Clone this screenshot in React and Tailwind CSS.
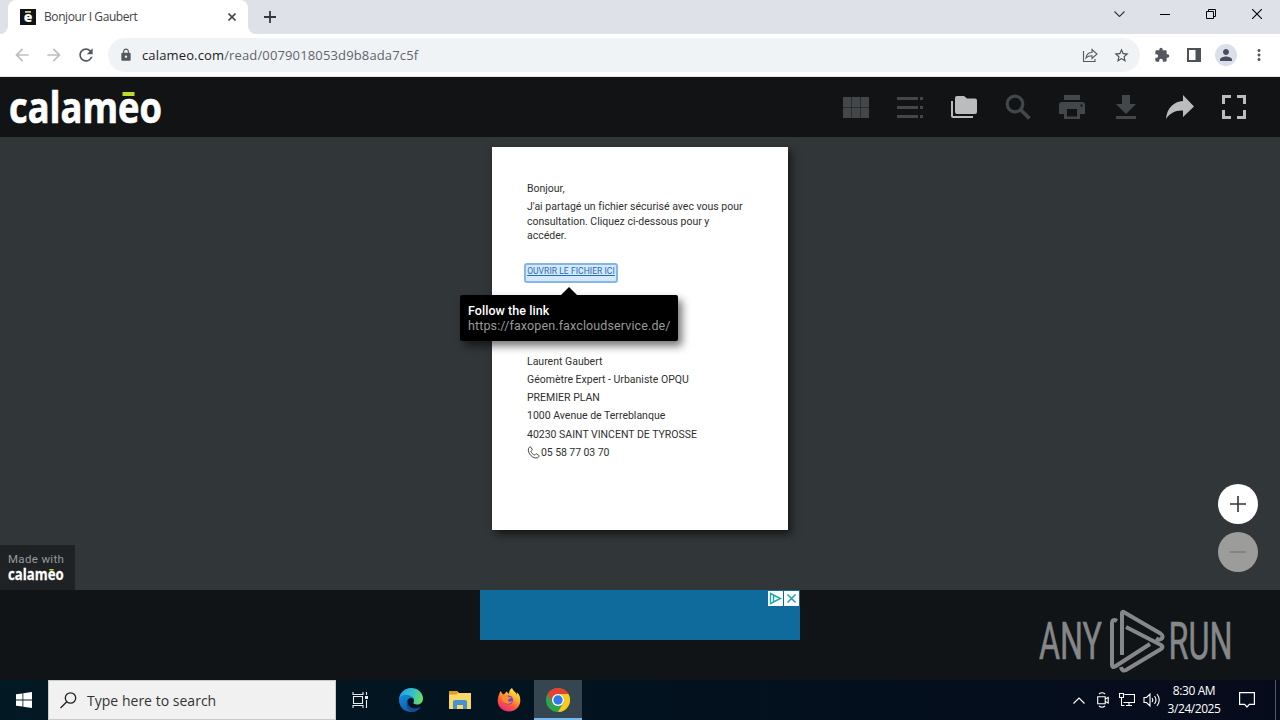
import React from "react";
import { MdSearch, MdExtension, MdStarBorder, MdLock, MdRefresh, MdPerson, MdArrowBack, MdArrowForward, MdMoreVert } from "react-icons/md";

function CalameoLogo({ className }) {
  return (
    <svg className={className} viewBox="0 0 152 33" overflow="visible">
      <text x="-1" y="31.200" fontFamily="Open Sans, Noto Sans, sans-serif" fontWeight="700" fontSize="43.500" textLength="153" lengthAdjust="spacingAndGlyphs" fill="#fff" stroke="#fff" strokeWidth=".7">calameo</text>
      <rect x="112.500" y="0" width="12" height="4" fill="#c2d82e" />
    </svg>
  );
}

function TabStrip() {
  return (
    <div className="flex h-[34px] shrink-0 items-stretch bg-[#dee1e8] pl-2">
      <div className="relative flex w-[240px] items-center rounded-t-lg bg-white pl-3">
        <svg className="absolute -left-2 bottom-0 h-2 w-2" viewBox="0 0 8 8"><path d="M8 0v8H0a8 8 0 0 0 8-8" fill="#fff" /></svg>
        <svg className="absolute -right-2 bottom-0 h-2 w-2" viewBox="0 0 8 8"><path d="M0 0v8h8a8 8 0 0 1-8-8" fill="#fff" /></svg>
        <svg className="h-4 w-4" viewBox="0 0 16 16" overflow="visible">
          <rect width="16" height="16" fill="#111416" />
          <text x="8" y="13.300" fontSize="14" fontWeight="800" fontFamily="Open Sans, sans-serif" textAnchor="middle" fill="#fff">e</text>
          <rect x="5" y="2" width="6" height="1.800" fill="#c9cf78" />
        </svg>
        <span className="ml-2 whitespace-nowrap font-['Open_Sans','Noto_Sans',sans-serif] text-[12px] tracking-[-0.41px] text-[#3f4246]">Bonjour I Gaubert</span>
        <svg className="ml-auto mr-3 h-2 w-2" viewBox="0 0 8 8"><path d="M.5.5l7 7m0-7l-7 7" stroke="#45484d" strokeWidth="1.600" /></svg>
      </div>
      <svg className="ml-4 mt-[11px] h-3 w-3" viewBox="0 0 12 12"><path d="M6 0v12M0 6h12" stroke="#35383c" strokeWidth="1.800" /></svg>
      <div className="ml-auto flex h-7 items-center">
        <svg className="mr-[35px] h-[6px] w-[11px]" viewBox="0 0 11 6"><path d="M.5.5l5 5 5-5" stroke="#33363a" strokeWidth="1.100" fill="none" /></svg>
        <svg className="mr-9 h-[11px] w-[10px]" viewBox="0 0 10 11"><path d="M0 5.500h10" stroke="#000" /></svg>
        <svg className="mr-9 h-[11px] w-[10px]" viewBox="0 0 10 11"><path d="M.5 2.500h7v7h-7zM2.500 2.500v-2h7v7h-2" stroke="#000" fill="none" /></svg>
        <svg className="mr-[18px] h-[10px] w-[10px]" viewBox="0 0 10 10"><path d="M0 0l10 10M10 0L0 10" stroke="#000" strokeWidth="1.100" /></svg>
      </div>
    </div>
  );
}

function AddressBar() {
  return (
    <div className="flex h-[43px] shrink-0 items-center border-b border-[#e4e5e8] bg-white pl-3">
      <MdArrowBack className="h-5 w-5 text-[#bcbec1]" />
      <MdArrowForward className="ml-3 h-5 w-5 text-[#bcbec1]" />
      <MdRefresh className="ml-3 h-5 w-5 text-[#54575b]" />
      <div className="ml-3 flex h-[34px] w-[1032px] items-center rounded-full bg-[#f0f3f6] pl-[11px]">
        <MdLock className="h-[14px] w-[14px] text-[#54585e]" />
        <span className="ml-[9px] whitespace-nowrap pt-px font-['Open_Sans','Noto_Sans',sans-serif] text-[13px] tracking-[0.14px] text-[#5f656c]"><span className="text-[#1c2024]">calameo.com</span>/read/0079018053d9b8ada7c5f</span>
        <svg className="ml-auto h-[15px] w-4" viewBox="0 0 16 15"><path d="M1.500 3v10.500H13V11M4 10c.6-4 3-5.500 6-5.500V1.500l5 4.500-5 4.500V7.700C7.500 7.700 5.500 8.200 4 10z" stroke="#54585e" strokeWidth="1.100" fill="none" /></svg>
        <MdStarBorder className="ml-[15px] mr-[10px] h-[17px] w-[17px] text-[#4b5057]" />
      </div>
      <MdExtension className="ml-[14px] h-4 w-4 text-[#54585e]" />
      <svg className="ml-[17px] h-[14px] w-[14px]" viewBox="0 0 14 14"><path d="M0 0h14v14H0zM2 2v10h6.500V2z" fillRule="evenodd" fill="#4d5257" /></svg>
      <div className="ml-[14px] flex h-[22px] w-[22px] items-center justify-center rounded-full bg-[#dbdfe9]"><MdPerson className="h-[18px] w-[18px] text-[#474c5e]" /></div>
      <MdMoreVert className="ml-[13px] h-[18px] w-[18px] text-[#54585e]" />
    </div>
  );
}

function ViewerHeader() {
  return (
    <header className="flex h-[60px] shrink-0 items-center bg-[#111315] pl-[10px] text-[#44474a]">
      <CalameoLogo className="mt-[2px] h-[33px] w-[152px]" />
      <div className="ml-auto mr-8 flex items-center gap-[26px]">
        <svg className="h-7 w-7" viewBox="0 0 28 28" fill="currentColor"><path d="M1 4h8.500v10H1zM10 4h8v10h-8zM18.500 4H27v10h-8.500zM1 14.500h8.500V25H1zM10 14.500h8V25h-8zM18.500 14.500H27V25h-8.500z" /></svg>
        <svg className="h-7 w-7" viewBox="0 0 28 28" fill="currentColor"><path d="M1 4h21v3H1zM24 4h3v3h-3zM1 13h21v3H1zM24 13h3v3h-3zM1 22h21v3H1zM24 22h3v3h-3z" /></svg>
        <svg className="h-7 w-7 text-[#bbbcbd]" viewBox="0 0 28 28" fill="currentColor"><path d="M1 8h2v15h20v2H3a2 2 0 0 1-2-2z" /><path d="M5 5a2 2 0 0 1 2-2h7l3 2.500h8a2 2 0 0 1 2 2V19a2 2 0 0 1-2 2H7a2 2 0 0 1-2-2z" /></svg>
        <svg className="h-7 w-7" viewBox="0 0 28 28"><circle cx="11" cy="11" r="7.800" stroke="currentColor" strokeWidth="3.200" fill="none" /><path d="M16.500 16.500l9 9" stroke="currentColor" strokeWidth="3.800" /></svg>
        <svg className="h-7 w-7" viewBox="0 0 28 28" fill="currentColor"><path d="M6 2h16v5H6zM4 9h20a3 3 0 0 1 3 3v9h-5v5H6v-5H1v-9a3 3 0 0 1 3-3zm5 7v7.500h10V16zm13.500-4.500v2h2v-2z" fillRule="evenodd" /></svg>
        <svg className="h-7 w-7" viewBox="0 0 28 28" fill="currentColor"><path d="M10 2h8v9h6l-10 10L4 11h6zM4 23h20v3H4z" /></svg>
        <svg className="h-7 w-7 text-[#bbbcbd]" viewBox="0 0 28 28" fill="currentColor"><path d="M0 26C.8 15.500 7.500 8.500 17 8V2l11 11.500L17 24v-6.500C9.500 17 4 20 0 26z" /></svg>
        <svg className="h-7 w-7 text-[#bbbcbd]" viewBox="0 0 28 28" fill="none"><path d="M3.500 11V3.500H11M17 3.500h7.500V11M24.500 17v7.500H17M11 24.500H3.500V17" stroke="currentColor" strokeWidth="3" /></svg>
      </div>
    </header>
  );
}

function Viewer() {
  return (
    <main className="relative flex h-[453px] shrink-0 items-start justify-center bg-[#313638] pt-[10px]">
      <article className="relative flex h-[383px] w-[296px] flex-col bg-white pl-[35px] pt-[33px] font-[Roboto,sans-serif] text-[10.5px] text-[#303030] shadow-[3px_4px_8px_rgba(0,0,0,0.6)]">
        <p className="h-[18px] whitespace-nowrap leading-[18px] tracking-[0px]">Bonjour,</p>
        <p className="mt-[2px] h-[44px] whitespace-nowrap leading-[14.6px]">
          <span className="block tracking-[0.01px]">J'ai partagé un fichier sécurisé avec vous pour</span>
          <span className="block tracking-[0px]">consultation. Cliquez ci-dessous pour y</span>
          <span className="block">accéder.</span>
        </p>
        <a className="-ml-[3px] mt-[19px] flex h-5 w-[94px] items-start justify-center whitespace-nowrap rounded-[3px] border-2 border-[#86b5e8] bg-[#d4e9fb] pt-px text-[8.5px] leading-[11px] tracking-[0.06px] text-[#286bb0] underline">OUVRIR LE FICHIER ICI</a>
        <div className="mt-[69.7px] whitespace-nowrap leading-[18.2px]">
          <p>Laurent Gaubert</p>
          <p>Géomètre Expert - Urbaniste OPQU</p>
          <p>PREMIER PLAN</p>
          <p>1000 Avenue de Terreblanque</p>
          <p>40230 SAINT VINCENT DE TYROSSE</p>
          <p className="flex items-center">
            <svg className="-mt-px mr-px h-[13px] w-[13px]" viewBox="0 0 13 13"><path d="M1.500 2.500C2 1 3.500.5 4.200 1.500l1 2C5.500 4.500 4 4.500 4 5.500c.5 1.500 2 3 3.500 3.500C8.500 9 8.500 7.500 9.500 7.800l2 1.200c1 .8.5 2-.8 2.700C6 13.500.2 7 1.500 2.500z" stroke="#333" strokeWidth=".9" fill="none" /></svg>
            <span className="tracking-[-0.08px]">05 58 77 03 70</span>
          </p>
        </div>
        <div className="absolute -left-8 top-[148px] h-[46px] w-[218px] whitespace-nowrap rounded-[2px] bg-black pl-2 pt-2 text-[12.5px] leading-[15px] shadow-[4px_5px_8px_rgba(0,0,0,0.55)]">
          <svg className="absolute left-[101px] -top-2 h-2 w-4" viewBox="0 0 16 8"><path d="M0 8L8 0l8 8z" fill="#000" /></svg>
          <p className="font-medium tracking-[0.06px] text-white">Follow the link</p>
          <p className="tracking-[0.12px] text-[#999]">https://faxopen.faxcloudservice.de/</p>
        </div>
      </article>
      <div className="absolute bottom-0 left-0 flex h-[45px] w-[75px] flex-col bg-[#1f2224] pl-2 pt-[6px]">
        <span className="whitespace-nowrap font-[Roboto,sans-serif] text-[11.5px] leading-4 tracking-[0.33px] text-[#96999b]">Made with</span>
        <CalameoLogo className="mt-[2px] h-[12px] w-[56px]" />
      </div>
      <div className="absolute bottom-[18px] right-[22px] flex flex-col gap-2">
        <button className="flex h-10 w-10 items-center justify-center rounded-full bg-white"><svg className="h-4 w-4" viewBox="0 0 16 16"><path d="M8 0v16M0 8h16" stroke="#333" strokeWidth="1.600" /></svg></button>
        <button className="flex h-10 w-10 items-center justify-center rounded-full bg-[#9c9c9b]"><svg className="h-4 w-4" viewBox="0 0 16 16"><path d="M0 8h16" stroke="#7c7d7d" strokeWidth="1.600" /></svg></button>
      </div>
    </main>
  );
}

function AdArea() {
  return (
    <section className="relative flex h-[90px] shrink-0 items-start justify-center bg-[#101416]">
      <div className="flex h-[50px] w-[320px] items-start justify-end gap-px bg-[#0e6b9b] pr-px pt-px">
        <svg className="h-[15px] w-[15px]" viewBox="0 0 15 15"><rect width="15" height="15" fill="#fff" /><path d="M2.500 2.500v10l10-5zM5.500 4.500v6" stroke="#19a9b2" strokeWidth="1.400" fill="none" /></svg>
        <svg className="h-[15px] w-[15px]" viewBox="0 0 15 15"><rect width="15" height="15" fill="#fff" /><path d="M3.500 3.500l8 8m0-8l-8 8" stroke="#19a2b5" strokeWidth="1.500" /></svg>
      </div>
      <svg className="absolute left-[1034px] top-[16px] h-[68px] w-[204px]" viewBox="0 0 204 68" overflow="visible">
        <g fill="#858788" stroke="#858788" strokeWidth=".6" fontFamily="Roboto, sans-serif" fontSize="51">
          <text x="5" y="53" textLength="63" lengthAdjust="spacingAndGlyphs">ANY</text>
          <text x="134.500" y="53" textLength="64" lengthAdjust="spacingAndGlyphs">RUN</text>
        </g>
        <g fill="none" stroke="#858788" strokeWidth="4" strokeLinejoin="round">
          <path d="M88 49V7q0-2 2.500-.5l36 21q4 3 .5 5.500-2 1.500-5-.5" />
          <path d="M83 15q-5-3-5 3v41q0 3 3 1.500L116 38" />
          <path d="M92 21l35 18q3 2 0 4L92 64q-4 2-5-3" />
        </g>
      </svg>
    </section>
  );
}

function EdgeIcon() {
  return (
    <svg className="h-6 w-6" viewBox="0 0 24 24">
      <defs>
        <linearGradient id="edgeTop" x1="0" y1=".3" x2="1" y2=".5"><stop stopColor="#1fa0e8" /><stop offset=".55" stopColor="#35c1c9" /><stop offset="1" stopColor="#6ddb60" /></linearGradient>
        <linearGradient id="edgeBody" x1="0" y1="0" x2=".5" y2="1"><stop stopColor="#138bd8" /><stop offset="1" stopColor="#0f5cae" /></linearGradient>
      </defs>
      <path d="M0 12C0 5 5.500 0 12 0c7 0 12 5 12 10.500 0 4-3 6-6 6-2.500 0-4-1-3.500-2 1.500-2.500-.5-6-4-6C5 8.500 1 10 0 12z" fill="url(#edgeTop)" />
      <path d="M0 12C.5 8 4 6.500 8 7c3 .2 5.500 1.500 6 3.500-4-2-7 2-5.500 6 1.500 4 8 6 13 2.500C19 22.500 16 24 12 24 5 24 0 18.500 0 12z" fill="url(#edgeBody)" />
      <path d="M9 13c-1.500 5 5 10 12.500 6-1 2-3.500 4-6.500 4.700C9 24 5 17 9 13z" fill="#174a91" />
    </svg>
  );
}

function FirefoxIcon() {
  return (
    <svg className="h-6 w-6" viewBox="0 0 24 24">
      <defs><linearGradient id="fox" x1=".8" y1="0" x2=".25" y2="1"><stop stopColor="#fff052" /><stop offset=".35" stopColor="#ffb02e" /><stop offset=".65" stopColor="#ff5b39" /><stop offset="1" stopColor="#e5257d" /></linearGradient></defs>
      <path d="M3.500 3L6 6.500l1.500-.5 2-2.500L12 6c0-2 .5-4.500 3-6 1 3 4 4 5 7 0-.7 0-1.500-.5-2.500C22 5 23.500 9 23.300 13 23 19 18 23.500 12 23.500S.7 19 .7 13C.7 9 2 6.500 3.500 3z" fill="url(#fox)" />
      <circle cx="11.500" cy="12" r="4.600" fill="#7442d6" />
      <path d="M5 8c2.500-1.500 5-.5 7 1l2.500.5c-1 1.500-3.500 1-3.500 3 0 1.500 3 1.500 4.500.5-1 3-6 4-8.500 1C5 13 4.500 10 5 8z" fill="#ff8b2b" />
    </svg>
  );
}

function ChromeIcon() {
  return (
    <svg className="h-6 w-6" viewBox="0 0 24 24">
      <circle cx="12" cy="12" r="12" fill="#2da44f" />
      <path d="M1.600 6A12 12 0 0 1 22.400 6H12a6 6 0 0 0-5.200 9z" fill="#e8402f" />
      <path d="M22.400 6A12 12 0 0 1 12 24l5.200-9A6 6 0 0 0 12 6z" fill="#fcc81c" />
      <circle cx="12" cy="12" r="6" fill="#fff" /><circle cx="12" cy="12" r="4.700" fill="#3179e8" />
    </svg>
  );
}

function Taskbar() {
  return (
    <footer className="flex h-10 shrink-0 items-center bg-linear-to-r from-[#021923] via-[#03121f] to-[#060b1b]">
      <div className="flex w-12 justify-center"><svg className="h-4 w-4" viewBox="0 0 16 16" fill="#fff"><path d="M0 2.300L6.500 1.400v6.200H0zM7.300 1.300L16 0v7.600H7.300zM0 8.400h6.500v6.200L0 13.700zM7.300 8.400H16V16l-8.700-1.300z" /></svg></div>
      <div className="flex h-full w-[288px] items-center border border-[#c8cacb] bg-[#f1f1f1] pl-[11px]">
        <svg className="h-[17px] w-[17px]" viewBox="0 0 17 17"><circle cx="10.500" cy="6" r="5.200" stroke="#222" strokeWidth="1.300" fill="none" /><path d="M6.800 9.700L.5 16" stroke="#222" strokeWidth="1.300" /></svg>
        <span className="ml-[10px] whitespace-nowrap font-['Open_Sans','Noto_Sans',sans-serif] text-[14px] tracking-[0.02px] text-[#333]">Type here to search</span>
      </div>
      <div className="flex w-12 justify-center"><svg className="h-4 w-[17px]" viewBox="0 0 17 16" fill="none" stroke="#e7edef" strokeWidth="1.100"><path d="M1 0v2.500h10V0M1 16v-2.500h10V16M1.500 4.500h9v7h-9zM14.500 0v3M14.500 8v8" /><path d="M13 4h3v3h-3z" fill="#e7edef" stroke="none" /></svg></div>
      <div className="ml-[3px] flex w-12 justify-center"><EdgeIcon /></div>
      <div className="flex w-[50px] justify-center">
        <svg className="h-[20px] w-[22px]" viewBox="0 0 22 20"><path d="M0 1h8l2 2h12v16H0z" fill="#f9d768" /><path d="M0 1h7.500l1.500 2-1.500 1.500H0z" fill="#df9c24" /><path d="M4 19v-7q0-2 2-2h10q2 0 2 2v7h-4v-4H8v4z" fill="#4394cd" /></svg>
      </div>
      <div className="flex w-12 justify-center"><FirefoxIcon /></div>
      <div className="ml-px flex h-full w-12 items-center justify-center border-b-2 border-[#76b9ed] bg-[#364650] pt-[2px]"><ChromeIcon /></div>
      <div className="ml-auto flex h-full items-center text-white">
        <svg className="mr-3 h-[7px] w-3" viewBox="0 0 12 7"><path d="M.5 6.500L6 1l5.500 5.500" stroke="#fff" strokeWidth="1.200" fill="none" /></svg>
        <svg className="mr-[10px] h-4 w-3" viewBox="0 0 12 16" fill="none" stroke="#fff" strokeWidth="1.100"><path d="M.7 4.700h7.500v7H.7zM8.200 7l3-1.500v5.500l-3-1.500M2 2q3-2.500 6 0M2 14q3 2.500 6 0" /></svg>
        <svg className="mr-2 h-[14px] w-4" viewBox="0 0 16 14" fill="none" stroke="#fff" strokeWidth="1.100"><path d="M5.500 1.500h10v8H4.500M.5.500h4v4h-4zM2.500 4.500v8h3M10 9.500v3M7 12.500h6" /></svg>
        <svg className="mr-[7px] h-4 w-[17px]" viewBox="0 0 17 16" fill="none" stroke="#fff" strokeWidth="1.100"><path d="M1 5.500h2.500L7 2v12L3.500 10.500H1zM9 6q1.500 2 0 4M11.500 4q3 4 0 8M14 2q4.500 6 0 12" /></svg>
        <div className="-mt-[2px] flex w-[54px] flex-col items-center whitespace-nowrap pt-px font-['Open_Sans','Noto_Sans',sans-serif] text-[12px] leading-[18px]"><span className="tracking-[-0.4px]">8:30 AM</span><span className="tracking-[-0.45px]">3/24/2025</span></div>
        <svg className="ml-[18px] mr-5 h-4 w-4" viewBox="0 0 16 16" fill="none" stroke="#fff" strokeWidth="1.200"><path d="M.6.600h14.800v11.800h-5L8 15l-2.400-2.600h-5z" /></svg>
        <div className="mr-1 h-full w-px bg-[#555967]" />
      </div>
    </footer>
  );
}

export default function App() {
  return (
    <div className="flex h-[720px] w-[1280px] flex-col overflow-hidden bg-[#101416]">
      <TabStrip />
      <AddressBar />
      <ViewerHeader />
      <Viewer />
      <AdArea />
      <Taskbar />
    </div>
  );
}
